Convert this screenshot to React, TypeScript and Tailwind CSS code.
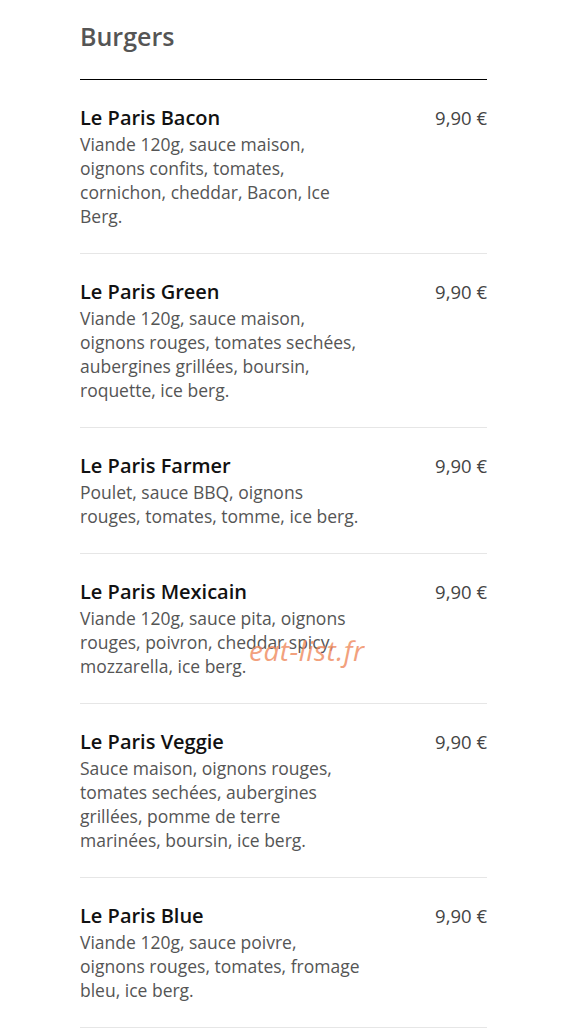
import React from "react";

const items = [
  { name: "Le Paris Bacon", desc: "Viande 120g, sauce maison, oignons confits, tomates, cornichon, cheddar, Bacon, Ice Berg." },
  { name: "Le Paris Green", desc: "Viande 120g, sauce maison, oignons rouges, tomates sechées, aubergines grillées, boursin, roquette, ice berg." },
  { name: "Le Paris Farmer", desc: "Poulet, sauce BBQ, oignons rouges, tomates, tomme, ice berg." },
  { name: "Le Paris Mexicain", desc: "Viande 120g, sauce pita, oignons rouges, poivron, cheddar spicy, mozzarella, ice berg." },
  { name: "Le Paris Veggie", desc: "Sauce maison, oignons rouges, tomates sechées, aubergines grillées, pomme de terre marinées, boursin, ice berg." },
  { name: "Le Paris Blue", desc: "Viande 120g, sauce poivre, oignons rouges, tomates, fromage bleu, ice berg." },
];

export default function App() {
  return (
    <div className="relative min-h-[1030px] bg-white" style={{ fontFamily: '"Open Sans", sans-serif' }}>
      <div className="ml-[80px] w-[407px]">
        <h2 className="pt-[20px] pb-[27px] text-[25px] leading-[32px] font-semibold text-[#555] border-b border-black">
          Burgers
        </h2>
        {items.map((it) => (
          <div key={it.name} className="flex justify-between pt-[24px] pb-[25px] border-b border-[#e6e6e6]">
            <div className="w-[282px]">
              <div className="text-[20px] leading-[28px] font-semibold text-[#111]">{it.name}</div>
              <div className="text-[17.5px] leading-[24px] text-[#555]">{it.desc}</div>
            </div>
            <div className="text-[18.5px] leading-[28px] font-normal text-[#444] whitespace-nowrap">9,90 €</div>
          </div>
        ))}
      </div>
      <div className="absolute left-[249px] top-[630px] text-[28px] leading-[40px] italic text-[#f08a5d] opacity-80 tracking-[0.5px]">
        eat-list.fr
      </div>
    </div>
  );
}
